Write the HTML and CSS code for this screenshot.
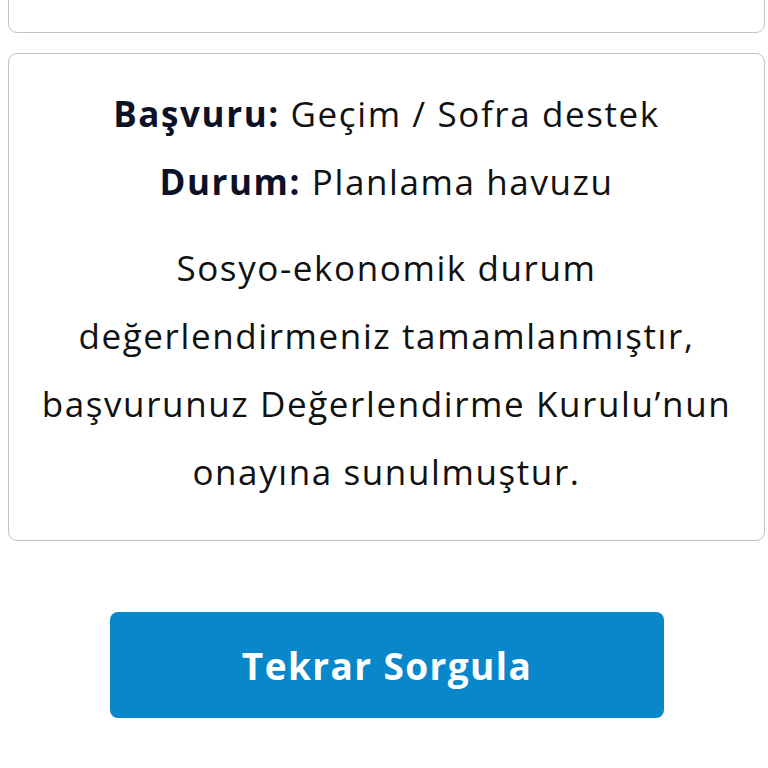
FILE: index.html
```html
<!DOCTYPE html>
<html lang="tr">
<head>
  <meta charset="UTF-8">
  <meta name="viewport" content="width=device-width, initial-scale=1.0">
  <title>Başvuru Sorgulama</title>
  <link rel="stylesheet" href="styles.css">
</head>
<body>
  <div class="page">
    <div class="card card-top"></div>

    <div class="card result">
      <p class="row"><b>Başvuru:</b> Geçim / Sofra destek</p>
      <p class="row"><b>Durum:</b> Planlama havuzu</p>
      <p class="message">Sosyo-ekonomik durum<br>değerlendirmeniz tamamlanmıştır,<br>başvurunuz Değerlendirme Kurulu’nun<br>onayına sunulmuştur.</p>
    </div>

    <div class="actions">
      <button class="button">Tekrar Sorgula</button>
    </div>
  </div>
</body>
</html>
```

FILE: styles.css
```css
body {
  font-family: "Open Sans", "Noto Sans", sans-serif;
  margin: 0;
  background-color: #fff;
  color: #111;
}
.page {
  padding: 0 3px 0 8px;
}
.card {
  border: 1.5px solid #c4c4c4;
  border-radius: 9px;
  background: #fff;
}
.card-top {
  height: 60px;
  margin-top: -29px;
}
.result {
  margin-top: 20px;
  padding: 26px 0 34px;
  text-align: center;
  letter-spacing: 1.6px;
}
.row {
  margin: 0;
  font-size: 35px;
  line-height: 68px;
}
.row b {
  color: #0c1127;
  font-weight: 700;
}
.message {
  margin: 18px 0 0;
  font-size: 35px;
  line-height: 68px;
  white-space: nowrap;
}
.actions {
  display: flex;
  justify-content: center;
  padding-top: 71px;
  padding-left: 1px;
}
.button {
  width: 554px;
  height: 106px;
  border: none;
  border-radius: 8px;
  background-color: #0987cb;
  color: #fff;
  font-family: inherit;
  font-size: 37px;
  font-weight: 700;
  letter-spacing: 1.4px;
  cursor: pointer;
}
```
